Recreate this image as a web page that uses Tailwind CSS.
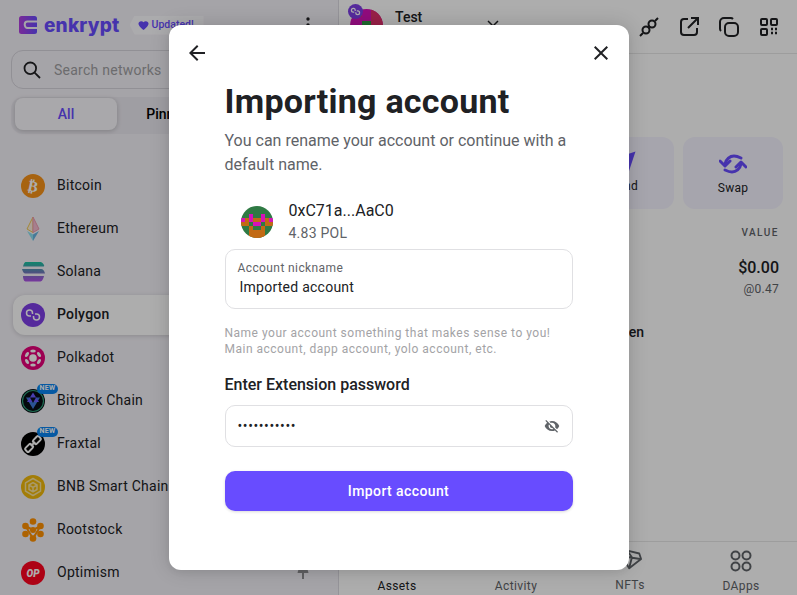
<!DOCTYPE html>
<html lang="en">
<head>
  <meta charset="UTF-8">
  <title>Enkrypt</title>
  <script src="https://cdn.jsdelivr.net/npm/@tailwindcss/browser@4"></script>
</head>
<body class="font-['Roboto',sans-serif] overflow-hidden">
  <div class="relative flex w-[797px] h-[595px] overflow-hidden bg-white">

    <!-- Sidebar -->
    <aside class="w-[339px] h-full shrink-0 flex flex-col bg-[#f4f2f8] border-r border-[#dcdae2]">
      <div class="flex items-center h-[50px] pl-[19px] pr-[18px]">
        <svg class="w-[18px] h-[18px]" viewBox="0 0 18 18">
          <defs><linearGradient id="lg" x1="0" x2="1" y1="0" y2="0"><stop offset="0" stop-color="#b33fe0"/><stop offset="1" stop-color="#684cff"/></linearGradient></defs>
          <rect width="18" height="18" rx="2.500" fill="url(#lg)"/>
          <path d="M18 5.500H8.500c-1.700 0-2.800 1.300-2.800 3s1.100 3.500 2.800 3.500H18" fill="none" stroke="#f4f2f8" stroke-width="2"/>
        </svg>
        <span class="ml-[7px] font-['Inter',sans-serif] font-extrabold text-[19px] leading-none tracking-[0.2px] text-[#684cff]">enkrypt</span>
        <span class="ml-[10px] flex items-center gap-[3px] w-[74px] h-[19px] pl-[8px] bg-[#fdfcff] [clip-path:polygon(5px_0,100%_0,100%_100%,5px_100%,0_50%)] text-[#684cff] text-[10.500px] font-medium">
          <svg class="w-[11px] h-[11px] shrink-0" viewBox="0 0 24 24" fill="#684cff"><path d="M12 22l-1.500-1.400C5.400 16 1 12.300 1 8.300 1 5 3.600 2.500 6.900 2.500c2 0 3.900.9 5.100 2.400 1.200-1.500 3.100-2.400 5.100-2.400C20.400 2.500 23 5 23 8.300c0 4-4.400 7.700-9.500 12.300L12 22z"/></svg>
          <span class="whitespace-nowrap">Updated!</span>
        </span>
        <svg class="ml-auto w-6 h-6" viewBox="0 0 24 24" fill="#202124"><circle cx="12" cy="6" r="1.700"/><circle cx="12" cy="12" r="1.700"/><circle cx="12" cy="18" r="1.700"/></svg>
      </div>

      <div class="mx-[11px] h-[39px] flex items-center pl-[10px] rounded-xl border border-[#d6d4dc] bg-[#f4f2f8]">
        <svg class="w-[20px] h-[20px]" viewBox="0 0 20 20" fill="none" stroke="#202124" stroke-width="1.800"><circle cx="8.300" cy="8.300" r="5.800"/><path d="M12.600 12.600L18 18"/></svg>
        <span class="ml-3 pt-[2px] text-[14px] tracking-[0.25px] text-[#9f9fa2]">Search networks</span>
      </div>

      <div class="mt-2 mx-[11px] h-[37px] flex rounded-xl bg-[#ebe9f0] pl-1 pt-[1px]">
        <div class="w-[102px] h-[32px] flex items-center justify-center rounded-lg bg-[#f9f8fc] shadow-[0_1px_5px_rgba(0,0,0,0.2)] text-[14px] font-medium text-[#684cff]">All</div>
        <div class="w-[102px] h-[32px] flex items-center justify-center text-[14px] font-medium text-black">Pinned</div>
      </div>

      <ul class="mt-[30px] flex flex-col">
        <li class="flex items-center h-[43px] pl-[21px]">
          <svg class="w-6 h-6" viewBox="0 0 24 24"><circle cx="12" cy="12" r="12" fill="#f7931a"/><text x="12" y="17.500" text-anchor="middle" fill="#fff" font-family="DejaVu Sans" font-weight="700" font-size="15" transform="rotate(12 12 12)">₿</text></svg>
          <span class="ml-3 text-[14px] tracking-[0.25px] text-[#202124]">Bitcoin</span>
        </li>
        <li class="flex items-center h-[43px] pl-[21px]">
          <svg class="w-6 h-6" viewBox="0 0 24 24"><path d="M12 0L6 12l6 3.500 6-3.500z" fill="#fbeedd"/><path d="M12 0v15.500L6 12z" fill="none" stroke="#f0c850" stroke-width="1"/><path d="M12 0v15.500l6-3.500z" fill="#f5bcd0" stroke="#ec9ab0" stroke-width="1"/><path d="M6 14l6 10v-6.500z" fill="#8ce0f0"/><path d="M18 14l-6 10v-6.500z" fill="#68b4e0"/></svg>
          <span class="ml-3 text-[14px] tracking-[0.25px] text-[#202124]">Ethereum</span>
        </li>
        <li class="flex items-center h-[43px] pl-[21px]">
          <svg class="w-6 h-6" viewBox="0 0 24 24"><defs><linearGradient id="sol" x1="0" x2="0" y1="0" y2="1"><stop offset="0" stop-color="#17c4a0"/><stop offset=".5" stop-color="#6a7fb8"/><stop offset="1" stop-color="#b050e8"/></linearGradient></defs><path fill="url(#sol)" d="M4.500 2h15c1 0 2.500 1 3.500 3 .5 1 0 1.500-1 1.500H2c.5-2 1.500-4.500 2.500-4.500zM1 9h19c2 0 3.500 2 4 4.500H4C2.500 13.500 1.500 11 1 9zM2 16h21c-.5 2.500-2 5.500-3.500 5.500h-15C3 21.500 2 18.500 2 16z"/></svg>
          <span class="ml-3 text-[14px] tracking-[0.25px] text-[#202124]">Solana</span>
        </li>
        <li class="flex items-center h-[40px] my-[1.500px] ml-[13px] pl-2 rounded-l-xl bg-white shadow-[0_1px_5px_rgba(0,0,0,0.16)]">
          <svg class="w-6 h-6" viewBox="0 0 24 24"><circle cx="12" cy="12" r="12" fill="#7e3fe6"/><g fill="none" stroke="#fff" stroke-width="1.500"><path d="M11.500 11V10a3 3 0 10-3 3h1.500"/><path d="M12.500 13v1a3 3 0 103-3H14"/></g></svg>
          <span class="ml-3 text-[14px] font-medium tracking-[0.25px] text-[#202124]">Polygon</span>
        </li>
        <li class="flex items-center h-[43px] pl-[21px]">
          <svg class="w-6 h-6" viewBox="0 0 24 24"><circle cx="12" cy="12" r="12" fill="#e6007a"/><circle cx="12" cy="12" r="3.800" fill="#fff"/><g fill="#fff"><ellipse cx="12" cy="5" rx="2.800" ry="1.600"/><ellipse cx="12" cy="19" rx="2.800" ry="1.600"/><ellipse cx="6" cy="8.500" rx="2.800" ry="1.600" transform="rotate(-60 6 8.500)"/><ellipse cx="18" cy="8.500" rx="2.800" ry="1.600" transform="rotate(60 18 8.500)"/><ellipse cx="6" cy="15.500" rx="2.800" ry="1.600" transform="rotate(60 6 15.500)"/><ellipse cx="18" cy="15.500" rx="2.800" ry="1.600" transform="rotate(-60 18 15.500)"/></g></svg>
          <span class="ml-3 text-[14px] tracking-[0.25px] text-[#202124]">Polkadot</span>
        </li>
        <li class="flex items-center h-[43px] pl-[21px]">
          <div class="relative w-6 h-6">
            <svg class="w-6 h-6" viewBox="0 0 24 24"><circle cx="12" cy="12" r="12" fill="#060c12"/><circle cx="12" cy="12" r="10.500" fill="none" stroke="#2f9d78" stroke-width="1.200"/><path d="M5 8.500h14L12 20z" fill="#3f7ad8"/><path d="M12 3.500l6 9.500H6z" fill="#6a5cff"/><path d="M9 8.500h6L12 14z" fill="#0a1020"/></svg>
            <span class="absolute -top-[5px] left-[16px] flex items-center justify-center w-[21px] h-[10px] rounded-full bg-[#0a84f0] text-white text-[7px] font-bold leading-none tracking-[0.4px]">NEW</span>
          </div>
          <span class="ml-3 text-[14px] tracking-[0.25px] text-[#202124]">Bitrock Chain</span>
        </li>
        <li class="flex items-center h-[43px] pl-[21px]">
          <div class="relative w-6 h-6">
            <svg class="w-6 h-6" viewBox="0 0 24 24"><circle cx="12" cy="12" r="12" fill="#000"/><g fill="none" stroke="#fff" stroke-width="2" transform="rotate(-45 12 12)"><rect x="2.500" y="9.500" width="8" height="5" rx="1.500"/><rect x="13.500" y="9.500" width="8" height="5" rx="1.500"/><path d="M9 12h6"/></g></svg>
            <span class="absolute -top-[5px] left-[16px] flex items-center justify-center w-[21px] h-[10px] rounded-full bg-[#0a84f0] text-white text-[7px] font-bold leading-none tracking-[0.4px]">NEW</span>
          </div>
          <span class="ml-3 text-[14px] tracking-[0.25px] text-[#202124]">Fraxtal</span>
        </li>
        <li class="flex items-center h-[43px] pl-[21px]">
          <svg class="w-6 h-6" viewBox="0 0 24 24"><circle cx="12" cy="12" r="12" fill="#f0b90b"/><g fill="none" stroke="#fff" stroke-width="1.500" stroke-linejoin="round" opacity=".6"><path d="M12 3.500l7.500 4.300v8.400L12 20.500l-7.500-4.300V7.800z"/><path d="M8 10l4-2.300 4 2.300v4.500l-4 2.300-4-2.300zM8 10l4 2.300 4-2.300M12 12.300v4.500"/></g></svg>
          <span class="ml-3 text-[14px] tracking-[0.25px] text-[#202124]">BNB Smart Chain</span>
        </li>
        <li class="flex items-center h-[43px] pl-[21px]">
          <svg class="w-6 h-6" viewBox="0 0 24 24" fill="#ff9100"><circle cx="12" cy="3.500" r="3.300"/><circle cx="4.500" cy="8" r="3.300"/><circle cx="19.500" cy="8" r="3.300"/><circle cx="12" cy="12" r="3"/><circle cx="4.500" cy="16" r="3.300"/><circle cx="19.500" cy="16" r="3.300"/><circle cx="12" cy="20.500" r="3.300"/><path d="M4.500 8L12 12l7.500-4L12 20.500z" fill="none" stroke="#ff9100" stroke-width="2"/></svg>
          <span class="ml-3 text-[14px] tracking-[0.25px] text-[#202124]">Rootstock</span>
        </li>
        <li class="flex items-center h-[43px] pl-[21px]">
          <svg class="w-6 h-6" viewBox="0 0 24 24"><circle cx="12" cy="12" r="12" fill="#ff0420"/><text x="12" y="15.500" text-anchor="middle" fill="#fff" font-family="Roboto" font-weight="900" font-style="italic" font-size="10">OP</text></svg>
          <span class="ml-3 text-[14px] tracking-[0.25px] text-[#202124]">Optimism</span>
          <svg class="ml-auto mr-[28px] w-[14px] h-[14px]" viewBox="0 0 14 14" fill="#8f8f93"><path d="M7 1c3 0 5 2 5.500 6h-11C2 3 4 1 7 1z"/><rect x="6" y="7" width="2" height="6"/></svg>
        </li>
      </ul>
    </aside>

    <!-- Main panel -->
    <main class="flex-1 min-w-0 h-full flex flex-col bg-white">
      <header class="h-[54px] shrink-0 flex items-center border-b border-[#e8e8e8]">
        <div class="relative w-[33px] h-[33px] ml-[11px] -mt-[2px]">
          <svg class="w-[33px] h-[33px] rounded-full" viewBox="0 0 8 8" shape-rendering="crispEdges">
            <rect width="8" height="8" fill="#d612b8"/>
            <path fill="#e0306a" d="M5 0h3v8H5zM2 1h1v1H2z"/>
            <path fill="#2f9a44" d="M3 3h2v2H3z"/>
          </svg>
          <svg class="absolute -top-[5px] -left-[2px] w-[15px] h-[15px]" viewBox="0 0 24 24"><circle cx="12" cy="12" r="12" fill="#7e3fe6"/><g fill="none" stroke="#fff" stroke-width="2"><path d="M11.500 11V10a3 3 0 10-3 3h1.500"/><path d="M12.500 13v1a3 3 0 103-3H14"/></g></svg>
        </div>
        <div class="ml-3 -mt-[18px] text-[14px] font-medium text-[#202124]">Test</div>
        <svg class="ml-[65px] -mt-[5px] w-[12px] h-[12px]" viewBox="0 0 12 12" fill="none" stroke="#202124" stroke-width="1.500"><path d="M1 3l5 5 5-5"/></svg>
        <div class="ml-auto mr-[16px] flex items-center gap-4">
          <svg class="w-6 h-6" viewBox="0 0 24 24" fill="none" stroke="#202124" stroke-width="2"><circle cx="9" cy="15" r="3.500"/><circle cx="15" cy="9" r="3.500"/><path d="M18 6l3-3M3 21l3-3M11 13l2-2"/></svg>
          <svg class="w-6 h-6" viewBox="0 0 24 24" fill="none" stroke="#202124" stroke-width="2"><path d="M11 4H7a3 3 0 00-3 3v10a3 3 0 003 3h10a3 3 0 003-3v-4M14 3h7v7M21 3L11 13"/></svg>
          <svg class="w-6 h-6" viewBox="0 0 24 24" fill="none" stroke="#202124" stroke-width="2"><rect x="8" y="8" width="13" height="13" rx="4"/><path d="M4 16a3 3 0 01-1-2.500V7a4 4 0 014-4h6.500A3 3 0 0116 4"/></svg>
          <svg class="w-6 h-6" viewBox="0 0 24 24" fill="none" stroke="#202124" stroke-width="2"><rect x="4" y="4" width="6" height="6" rx="1"/><rect x="14" y="4" width="6" height="6" rx="1"/><rect x="4" y="14" width="6" height="6" rx="1"/><path d="M14 14h2M18 14h2M14 18h2M18 18h2" stroke-width="2.500"/></svg>
        </div>
      </header>

      <div class="flex-1 flex flex-col pr-[14px]">
        <div class="mt-[83px] flex justify-end gap-[9px]">
          <div class="w-[100px] h-[72px] rounded-xl bg-[#f5f3ff] flex flex-col items-center">
            <svg class="mt-[13px] w-6 h-6" viewBox="0 0 24 24" fill="#684cff"><path d="M23.500 1.500L1 9l8 5 7 10z"/></svg>
            <span class="mt-[3px] text-[12px] tracking-[0.25px] text-[#202124]">Send</span>
          </div>
          <div class="w-[100px] h-[72px] rounded-xl bg-[#f5f3ff] flex flex-col items-center">
            <svg class="mt-[15px] w-[28px] h-[24px]" viewBox="0 0 28 24" fill="none" stroke="#684cff" stroke-width="3" stroke-linecap="round"><path d="M6 12c1-5 5-8 9-8 3 0 5 1 7 2"/><path d="M22 12c-1 5-5 8-9 8-3 0-5-1-7-2"/><path d="M1 9l5 5 5-5M17 15l5-5 5 5" stroke-linejoin="round"/></svg>
            <span class="mt-[3px] text-[12px] tracking-[0.25px] text-[#202124]">Swap</span>
          </div>
        </div>
        <div class="mt-[17px] pr-[4px] text-right text-[10px] font-medium tracking-[1.5px] leading-[14px] text-[#5f6368]">VALUE</div>
        <div class="mt-[18px] pr-[4px] text-right text-[16px] font-medium leading-[20px] text-[#202124]">$0.00</div>
        <div class="mt-[2px] pr-[4px] text-right text-[12px] tracking-[0.25px] leading-[18px] text-[#5f6368]">@0.47</div>
        <div class="mt-[24px] pr-[139px] text-right text-[14px] font-medium leading-[20px] text-[#202124]">Hidden</div>
      </div>

      <nav class="h-[54px] shrink-0 flex border-t border-[#e8e8e8] text-[12px] tracking-[0.4px]">
        <div class="w-[116px] shrink-0 flex flex-col items-center justify-end text-[#202124]">Assets</div>
        <div class="w-[122px] shrink-0 flex flex-col items-center justify-end text-[#5f6368]">Activity</div>
        <div class="w-[106px] shrink-0 flex flex-col items-center text-[#5f6368]">
          <svg class="mt-[6px] ml-[2px] w-[22px] h-[22px]" viewBox="0 0 24 24" fill="none" stroke="#5f6368" stroke-width="2" stroke-linejoin="round"><path d="M7 2.500l14 3.500 2 6-13 10L2 9z"/><path d="M3 9l19 3M8 3l5 7-3 12"/></svg>
          <span class="mt-[6px]">NFTs</span>
        </div>
        <div class="w-[116px] shrink-0 flex flex-col items-center text-[#5f6368]">
          <svg class="mt-[7px] w-6 h-6" viewBox="0 0 24 24" fill="none" stroke="#5f6368" stroke-width="2"><circle cx="6.500" cy="6.500" r="4"/><circle cx="17.500" cy="6.500" r="4"/><circle cx="6.500" cy="17.500" r="4"/><circle cx="17.500" cy="17.500" r="4"/></svg>
          <span class="mt-[4px]">DApps</span>
        </div>
      </nav>
    </main>

    <!-- Dim layer with the modal -->
    <div class="absolute inset-0 flex items-center justify-center bg-black/32">
      <div class="w-[460px] h-[545px] rounded-xl bg-white shadow-[0_3px_6px_rgba(0,0,0,0.04),0_0_20px_rgba(0,0,0,0.16)] flex flex-col">
        <div class="flex justify-between pt-4 px-4">
          <svg class="w-6 h-6" viewBox="0 0 24 24" fill="#202124"><path d="M20 11H7.800l5.600-5.600L12 4l-8 8 8 8 1.400-1.400L7.800 13H20z"/></svg>
          <svg class="w-6 h-6" viewBox="0 0 24 24" fill="#202124"><path d="M19 6.400L17.600 5 12 10.600 6.400 5 5 6.400 10.600 12 5 17.600 6.400 19 12 13.400 17.600 19 19 17.600 13.400 12z"/></svg>
        </div>
        <div class="px-[56px] flex flex-col">
          <h1 class="mt-[16px] text-[34px] leading-[40px] font-bold tracking-[0.25px] text-[#202124]">Importing account</h1>
          <p class="mt-[8px] text-[16px] leading-[24px] text-[#5f6368]">You can rename your account or continue with a default name.</p>

          <div class="mt-[17px] h-[48px] flex items-center pl-[16px]">
            <svg class="w-[32px] h-[32px] rounded-full mt-[8px]" viewBox="0 0 8 8" shape-rendering="crispEdges">
              <rect width="8" height="8" fill="#2f7a44"/>
              <path fill="#d612b8" d="M2 2h1v2H2zM5 2h1v2H5zM0 3h1v1H0zM7 3h1v1H7zM3 4h2v1H3z"/>
              <path fill="#c26a14" d="M1 3h1v1H1zM3 3h2v1H3zM6 3h1v1H6zM0 4h2v1H0zM6 4h2v1H6zM2 5h1v1H2zM5 5h1v1H5zM2 6h4v2H2z"/>
            </svg>
            <div class="ml-4 mt-[7px]">
              <div class="text-[16px] leading-[22px] text-[#202124]">0xC71a...AaC0</div>
              <div class="mt-[1px] text-[14px] tracking-[0.25px] leading-[20px] text-[#5f6368]">4.83 POL</div>
            </div>
          </div>

          <div class="mt-[7px] h-[60px] rounded-[10px] border border-[#e0e0e3] pl-3 pt-[11px]">
            <div class="text-[12px] leading-[14px] tracking-[0.4px] text-[#5f6368]">Account nickname</div>
            <div class="mt-[2px] ml-[2px] text-[14px] tracking-[0.25px] leading-[20px] text-[#202124]">Imported account</div>
          </div>

          <p class="mt-[16px] text-[12px] leading-[16px] tracking-[0.5px] text-[#a3a3a6]">Name your account something that makes sense to you! Main account, dapp account, yolo account, etc.</p>

          <div class="mt-[16px] text-[16px] leading-[24px] font-medium text-[#202124]">Enter Extension password</div>

          <div class="mt-[8px] h-[42px] flex items-center rounded-[10px] border border-[#e0e0e3] pl-3 pr-[12px]">
            <span class="text-[14px] tracking-[0.6px] text-[#202124]">•••••••••••</span>
            <svg class="ml-auto w-[16px] h-[16px]" viewBox="0 0 24 24" fill="#5f6368"><path d="M12 7c2.800 0 5 2.200 5 5 0 .6-.1 1.300-.4 1.800l2.900 2.900c1.500-1.200 2.700-2.900 3.400-4.700-1.700-4.400-6-7.500-11-7.500-1.400 0-2.700.3-4 .7l2.200 2.200c.6-.3 1.200-.4 1.900-.4zM2 4.300l2.300 2.300.4.4C3.100 8.300 1.800 10 1 12c1.700 4.400 6 7.500 11 7.500 1.600 0 3-.3 4.400-.8l.4.4 2.900 2.900 1.300-1.300L3.300 3 2 4.300zm5.500 5.500L9 11.400c0 .2-.1.400-.1.600 0 1.700 1.300 3 3 3 .2 0 .4 0 .6-.1l1.600 1.600c-.7.300-1.400.5-2.200.5-2.800 0-5-2.200-5-5 0-.8.200-1.500.5-2.200z"/></svg>
          </div>

          <button class="mt-[24px] h-[40px] rounded-[10px] bg-[#684cff] shadow-[0_1px_3px_rgba(0,0,0,0.15)] text-white text-[14px] font-medium tracking-[0.4px]">Import account</button>
        </div>
      </div>
    </div>
  </div>
</body>
</html>
